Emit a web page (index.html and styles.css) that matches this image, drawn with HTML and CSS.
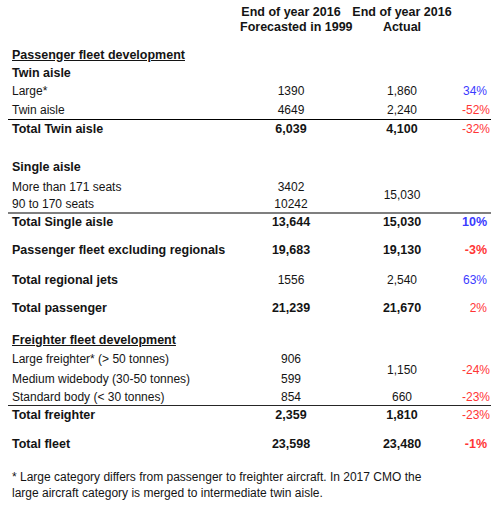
FILE: index.html
```html
<!DOCTYPE html>
<html>
<head>
<meta charset="utf-8">
<link rel="stylesheet" href="styles.css">
</head>
<body>
<div class="page">
  <div class="sheet">
    <div class="hd"></div>
    <div class="hd c">End of year 2016<br>Forecasted in 1999</div>
    <div class="hd c">End of year 2016<br>Actual</div>
    <div class="hd"></div>
    <div class="gap"></div>

    <div class="lbl b u full">Passenger fleet development</div>
    <div class="lbl b full">Twin aisle</div>

    <div class="lbl">Large*</div><div class="c">1390</div><div class="c">1,860</div><div class="r blue">34%</div>
    <div class="lbl">Twin aisle</div><div class="c">4649</div><div class="c">2,240</div><div class="r red">-52%</div>
    <div class="rule black"></div>
    <div class="lbl b">Total Twin aisle</div><div class="c b">6,039</div><div class="c b">4,100</div><div class="r red">-32%</div>
    <div class="gap"></div>

    <div class="lbl b full">Single aisle</div>
    <div class="lbl">More than 171 seats</div><div class="c">3402</div><div class="c span2">15,030</div><div class="r span2"></div>
    <div class="lbl">90 to 170 seats</div><div class="c">10242</div>
    <div class="rule grey"></div>
    <div class="lbl b">Total Single aisle</div><div class="c b">13,644</div><div class="c b">15,030</div><div class="r blue b">10%</div>
    <div class="gap"></div>

    <div class="lbl b">Passenger fleet excluding regionals</div><div class="c b">19,683</div><div class="c b">19,130</div><div class="r red b">-3%</div>
    <div class="gap"></div>
    <div class="lbl b">Total regional jets</div><div class="c">1556</div><div class="c">2,540</div><div class="r blue">63%</div>
    <div class="gap"></div>
    <div class="lbl b">Total passenger</div><div class="c b">21,239</div><div class="c b">21,670</div><div class="r red">2%</div>
    <div class="gap"></div>

    <div class="lbl b u full">Freighter fleet development</div>
    <div class="lbl">Large freighter* (&gt; 50 tonnes)</div><div class="c">906</div><div class="c span2">1,150</div><div class="r red span2">-24%</div>
    <div class="lbl">Medium widebody (30-50 tonnes)</div><div class="c">599</div>
    <div class="lbl">Standard body (&lt; 30 tonnes)</div><div class="c">854</div><div class="c">660</div><div class="r red">-23%</div>
    <div class="rule dark"></div>
    <div class="lbl b">Total freighter</div><div class="c b">2,359</div><div class="c b">1,810</div><div class="r red">-23%</div>
    <div class="gap"></div>
    <div class="lbl b">Total fleet</div><div class="c b">23,598</div><div class="c b">23,480</div><div class="r red b">-1%</div>
  </div>
  <p class="note">* Large category differs from passenger to freighter aircraft. In 2017 CMO the large aircraft category is merged to intermediate twin aisle.</p>
</div>
</body>
</html>
```

FILE: styles.css
```css
html, body {
  margin: 0;
  padding: 0;
  background: #ffffff;
}

.page {
  padding: 5px 9px 0 8px;
  font-family: "Liberation Sans", Arial, sans-serif;
  font-size: 12px;
  color: #141414;
}

.sheet {
  display: grid;
  grid-template-columns: 232px 102px 120px 29px;
  grid-template-rows:
    30px 10px
    19px 17px 20px 18px 1px 18px 19px
    20px 19px 16px 2px 16px 10px
    20px 10px 20px 8px 20px 12px
    20px 18px 21px 16px 1px 18px 10px 20px;
  align-items: center;
  white-space: nowrap;
}

.hd {
  align-self: start;
  font-weight: bold;
  font-size: 12.5px;
  line-height: 15px;
}

.gap {
  grid-column: 1 / -1;
}

.full {
  grid-column: 1 / -1;
}

.lbl {
  padding-left: 4px;
}

.c {
  text-align: center;
}

.r {
  text-align: right;
  padding-right: 4px;
}

.b {
  font-weight: bold;
  font-size: 12.5px;
}

.u {
  text-decoration: underline;
}

.span2 {
  grid-row: span 2;
}

.blue {
  color: #3b3bff;
}

.red {
  color: #ff3535;
}

.rule {
  grid-column: 1 / -1;
  align-self: stretch;
}

.rule.black {
  background: #000000;
}

.rule.grey {
  background: #7f7f7f;
}

.rule.dark {
  background: #262626;
}

.note {
  margin: 15px 0 0 0;
  padding-left: 4px;
  max-width: 436px;
  line-height: 16px;
}
```
